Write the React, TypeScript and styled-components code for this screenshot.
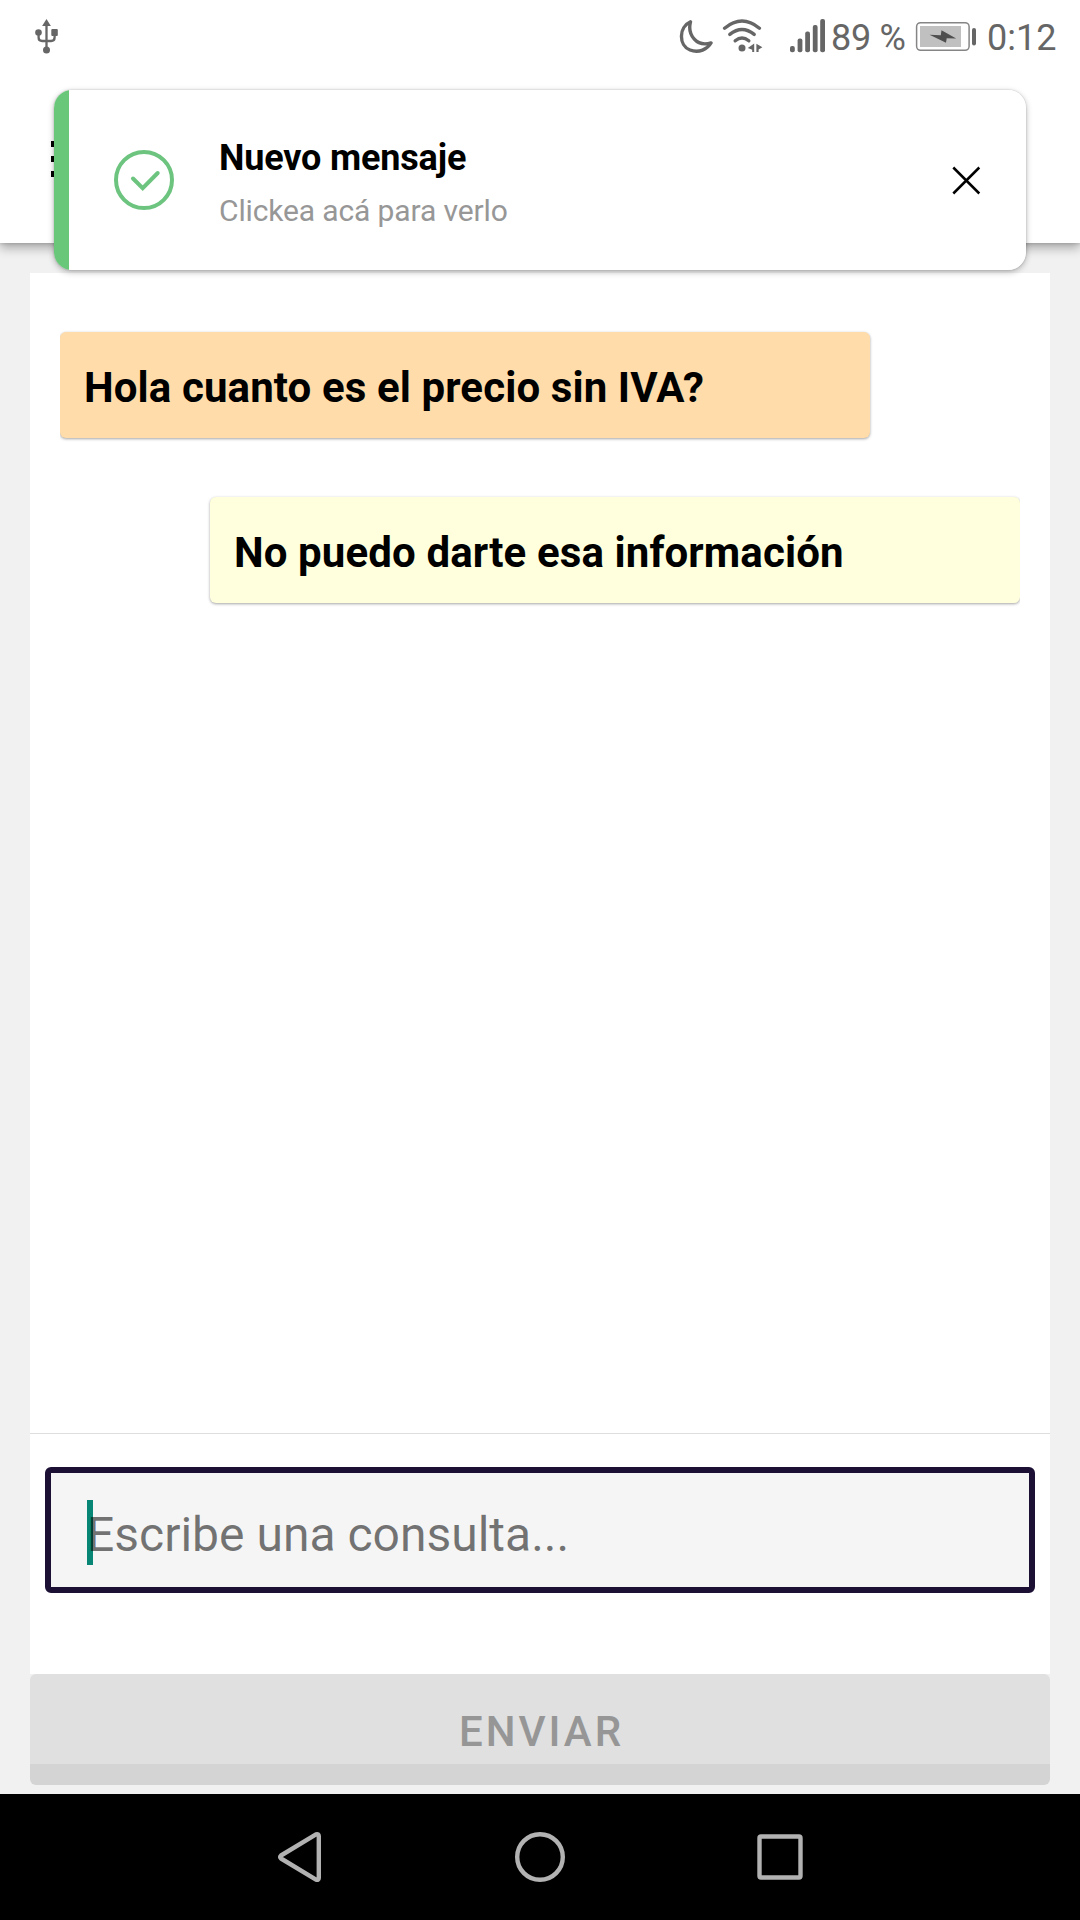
import React from "react";
import styled, { createGlobalStyle } from "styled-components";

const GlobalStyle = createGlobalStyle`
  * { box-sizing: border-box; }
  body { margin: 0; background: #f1f1f1; font-family: Roboto, "Noto Sans", sans-serif; }
`;

const Screen = styled.div`
  position: relative;
  display: flex;
  flex-direction: column;
  width: 1080px;
  height: 1920px;
  background: #f1f1f1;
  overflow: hidden;
`;

const TopArea = styled.header`
  flex: none;
  height: 243px;
  background: #fff;
  box-shadow: 0 5px 10px rgba(0, 0, 0, 0.3), 0 1px 3px rgba(0, 0, 0, 0.12);
`;

const StatusBar = styled.div`
  display: flex;
  align-items: center;
  height: 72px;
  padding: 0 24px 0 34px;
  color: #666;
`;

const StatusIcon = styled.svg<{ $after: number }>`
  display: block;
  flex: none;
  margin-right: ${(p) => p.$after}px;
`;

const Spacer = styled.div`
  flex: 1;
`;

const StatusText = styled.span<{ $width: number; $after: number; $spacing?: number }>`
  flex: none;
  width: ${(p) => p.$width}px;
  margin-right: ${(p) => p.$after}px;
  padding-top: 3px;
  font-size: 36px;
  line-height: 42px;
  letter-spacing: ${(p) => p.$spacing ?? 0}px;
  white-space: nowrap;
`;

const Toolbar = styled.div`
  display: flex;
  align-items: center;
  height: 171px;
  padding: 3px 51px 0;
`;

const MenuButton = styled.button`
  display: flex;
  flex-direction: column;
  gap: 9px;
  padding: 0;
  border: 0;
  background: none;
`;

const MenuLine = styled.span`
  width: 54px;
  height: 6px;
  background: #000;
`;

const Toast = styled.aside`
  position: absolute;
  top: 90px;
  left: 54px;
  display: flex;
  align-items: center;
  width: 972px;
  height: 180px;
  padding-right: 45px;
  border-radius: 18px;
  background: linear-gradient(to right, #69c779 15px, #fff 15px);
  box-shadow: 0 2px 6px rgba(0, 0, 0, 0.28), 0 0 2px rgba(0, 0, 0, 0.22);
`;

const ToastIcon = styled.svg`
  margin-left: 60px;
`;

const ToastBody = styled.div`
  flex: 1;
  margin-left: 45px;
  padding-top: 6px;
`;

const ToastTitle = styled.div`
  font-size: 36px;
  font-weight: 700;
  line-height: 42px;
  letter-spacing: -0.17px;
  color: #000;
`;

const ToastText = styled.div`
  margin-top: 14px;
  font-size: 30px;
  line-height: 36px;
  letter-spacing: -0.13px;
  color: #979797;
`;

const Panel = styled.main`
  display: flex;
  flex-direction: column;
  flex: none;
  height: 1401px;
  margin: 30px 30px 0;
  background: #fff;
`;

const Messages = styled.section`
  display: flex;
  flex-direction: column;
  gap: 59px;
  height: 1161px;
  padding: 59px 30px 0;
  border-bottom: 1px solid #dedede;
`;

const Bubble = styled.div<{ $own?: boolean }>`
  align-self: ${(p) => (p.$own ? "flex-end" : "flex-start")};
  width: 810px;
  height: 106px;
  padding: 31px 24px 0;
  border-radius: 6px;
  background: ${(p) => (p.$own ? "#ffffdd" : "#ffdcaa")};
  box-shadow: 0 1px 3px rgba(0, 0, 0, 0.36);
  clip-path: ${(p) => (p.$own ? "inset(-4px 0 -6px -4px)" : "inset(-4px -4px -6px 0)")};
  font-size: 42px;
  font-weight: 700;
  line-height: 49px;
  letter-spacing: 0.11px;
  color: #000;
`;

const Field = styled.div`
  display: flex;
  align-items: center;
  height: 126px;
  margin: 33px 15px 0;
  padding: 0 36px;
  border: 6px solid #1c1135;
  border-radius: 6px;
  background: #f5f5f5;
`;

const Caret = styled.span`
  width: 6px;
  height: 65px;
  margin: 5px -6px 0 0;
  background: #078575;
`;

const Placeholder = styled.span`
  padding-top: 9px;
  font-size: 48px;
  line-height: 56px;
  color: rgba(0, 0, 0, 0.54);
`;

const SendButton = styled.button`
  flex: none;
  height: 111px;
  margin: 0 30px;
  padding: 4px 0 0 3px;
  border: 0;
  border-radius: 6px;
  background: linear-gradient(to bottom, #e0e0e0 90px, #d4d4d4 90px);
  font-family: inherit;
  font-size: 42px;
  font-weight: 500;
  letter-spacing: 3px;
  line-height: 49px;
  color: #969696;
`;

const NavBar = styled.nav`
  display: flex;
  flex: none;
  align-items: center;
  justify-content: center;
  gap: 180px;
  height: 126px;
  margin-top: 9px;
  background: #000;
`;

const NavIcon = styled.svg`
  display: block;
  width: 60px;
  height: 60px;
  fill: none;
  stroke: #b2b2b2;
  stroke-width: 4.4;
  stroke-linejoin: round;
`;

export default function App() {
  return (
    <>
      <GlobalStyle />
      <Screen>
        <TopArea>
          <StatusBar>
            <StatusIcon $after={0} width="26" height="36" viewBox="34 18 26 36" fill="#666">
              <path d="M46.5 19l4.4 7h-8.8z" />
              <path d="M46.5 24v26M38.6 33v4.500q0 3.500 3.500 3.500h9q3.500 0 3.500-3.500V33" fill="none" stroke="#666" strokeWidth="2.300" />
              <circle cx="38.500" cy="32.500" r="3.300" />
              <rect x="51.300" y="29" width="6.500" height="7" rx="1" />
              <circle cx="46.500" cy="50" r="3.500" />
            </StatusIcon>
            <Spacer />
            <StatusIcon $after={7} width="35" height="36" viewBox="679 18 35 36">
              <path d="M690.500 21.800C678.500 27 678.500 45.500 690 50C699 53.500 707.500 49 711 43C704.500 44.800 698.500 44 694.300 39.200C689.500 33.800 689 27.500 690.500 21.800Z" fill="none" stroke="#666" strokeWidth="3.400" strokeLinejoin="round" />
            </StatusIcon>
            <StatusIcon $after={27} width="42" height="36" viewBox="721 18 42 36" fill="#666">
              <g fill="none" stroke="#666" strokeWidth="3.400" strokeLinecap="round">
                <path d="M724.600 28.200Q742 14 759.400 28.200" />
                <path d="M729.800 34.400Q742 24.500 754.200 34.400" />
                <path d="M735.200 40.800Q742 35 748.800 40.800" />
              </g>
              <circle cx="742" cy="48" r="3.500" />
              <path d="M747.800 48l6.400-4.500v8.500h-2v-2.300z" />
              <path d="M762.400 47.300l-6-3.500v8.200h2.200v-2.500z" />
            </StatusIcon>
            <StatusIcon $after={6} width="35" height="36" viewBox="790 18 35 36" fill="#666">
              <rect x="790" y="46" width="4.800" height="6.300" rx="2" />
              <rect x="797.600" y="38.500" width="4.800" height="13.800" rx="2" />
              <rect x="805.200" y="31.500" width="4.800" height="20.800" rx="2" />
              <rect x="812.800" y="25" width="4.800" height="27.300" rx="2" />
              <rect x="820.200" y="19" width="4.800" height="33.300" rx="2" />
            </StatusIcon>
            <StatusText $width={76} $after={8} $spacing={-0.3}>89 %</StatusText>
            <StatusIcon $after={10} width="62" height="36" viewBox="915 18 62 36">
              <rect x="916.600" y="22.700" width="52.500" height="27.600" rx="4" fill="none" stroke="#858585" strokeWidth="1.500" />
              <rect x="920" y="26" width="41" height="21" fill="#c0c0c0" />
              <path d="M929.500 34.700L940.800 35.300L941.500 30.200L956.200 38.600L946.700 38.200L946 42.800Z" fill="#4f4f4f" />
              <rect x="972" y="28" width="4" height="17.500" rx="2" fill="#666" />
            </StatusIcon>
            <StatusText $width={69} $after={0}>0:12</StatusText>
          </StatusBar>
          <Toolbar>
            <MenuButton aria-label="Menú">
              <MenuLine />
              <MenuLine />
              <MenuLine />
            </MenuButton>
          </Toolbar>
        </TopArea>

        <Panel>
          <Messages>
            <Bubble>Hola cuanto es el precio sin IVA?</Bubble>
            <Bubble $own>No puedo darte esa información</Bubble>
          </Messages>
          <Field>
            <Caret />
            <Placeholder>Escribe una consulta...</Placeholder>
          </Field>
        </Panel>
        <SendButton disabled>ENVIAR</SendButton>

        <NavBar>
          <NavIcon viewBox="270 1827 60 60">
            <path d="M281 1855.500L316 1834.300Q318.800 1833.500 318.800 1836V1878Q318.800 1880.500 316 1879.700L281 1858.500Q279.500 1857 281 1855.500Z" />
          </NavIcon>
          <NavIcon viewBox="510 1827 60 60">
            <circle cx="540" cy="1857" r="22.800" />
          </NavIcon>
          <NavIcon viewBox="750 1827 60 60">
            <rect x="759.500" y="1836.500" width="41" height="41" rx="1.500" />
          </NavIcon>
        </NavBar>

        <Toast>
          <ToastIcon width="60" height="60" viewBox="114 150 60 60" fill="none" stroke="#6cc47f" strokeWidth="4">
            <circle cx="144" cy="180" r="28" />
            <path d="M133 178.500l9.700 9.600L157.700 173" strokeLinecap="round" />
          </ToastIcon>
          <ToastBody>
            <ToastTitle>Nuevo mensaje</ToastTitle>
            <ToastText>Clickea acá para verlo</ToastText>
          </ToastBody>
          <svg width="30" height="30" viewBox="951 165 30 30" fill="none" stroke="#000" strokeWidth="2.500">
            <path d="M953.300 167.500l26 26M979.300 167.500l-26 26" />
          </svg>
        </Toast>
      </Screen>
    </>
  );
}
